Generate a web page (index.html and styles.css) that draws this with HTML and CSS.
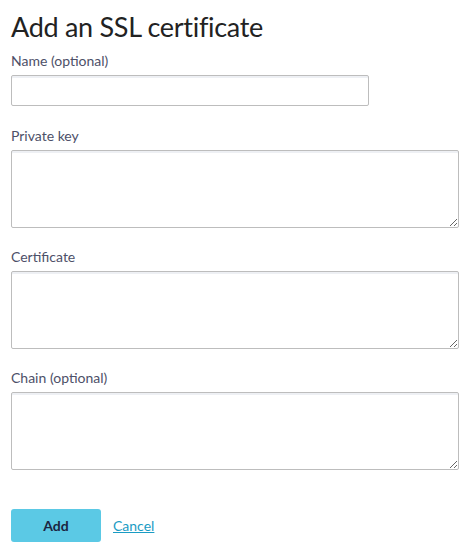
FILE: index.html
```html
<!DOCTYPE html>
<html>
<head>
<meta charset="utf-8">
<link rel="stylesheet" href="styles.css">
</head>
<body>
<form class="form">
  <h1 class="title">Add an SSL certificate</h1>
  <div class="field">
    <label class="label">Name (optional)</label>
    <input class="input" type="text">
  </div>
  <div class="field">
    <label class="label">Private key</label>
    <textarea class="textarea"></textarea>
  </div>
  <div class="field">
    <label class="label">Certificate</label>
    <textarea class="textarea"></textarea>
  </div>
  <div class="field">
    <label class="label">Chain (optional)</label>
    <textarea class="textarea"></textarea>
  </div>
  <div class="actions">
    <button class="btn" type="button">Add</button>
    <a class="cancel" href="#">Cancel</a>
  </div>
</form>
</body>
</html>
```
FILE: styles.css
```css
* { box-sizing: border-box; }
html, body { margin: 0; padding: 0; background: #fff; }
body {
  font-family: Lato, "Open Sans", "Liberation Sans", sans-serif;
  color: #222;
}
.form {
  padding: 11px 11px 0 11px;
  display: flex;
  flex-direction: column;
}
.title {
  margin: 0;
  font-size: 27px;
  font-weight: 400;
  line-height: 32px;
  color: #222;
  letter-spacing: -0.3px;
}
.field {
  display: flex;
  flex-direction: column;
  margin-top: 10px;
}
.field + .field { margin-top: 21px; }
.label {
  font-size: 14px;
  line-height: 16px;
  color: #4d5068;
  margin-bottom: 6px;
}
.input, .textarea {
  border: 1px solid #bdbdbd;
  border-radius: 2px;
  box-shadow: inset 0 2px 0 #eef0f4;
  background: #fff;
  font: inherit;
  outline: none;
}
.input {
  width: 358px;
  height: 31px;
  margin-bottom: 1px;
}
.textarea {
  width: 448px;
  height: 78px;
  resize: vertical;
  margin: 0;
  display: block;
}
.actions {
  display: flex;
  align-items: center;
  gap: 12px;
  margin-top: 39px;
}
.btn {
  width: 90px;
  height: 33px;
  border: none;
  border-radius: 3px;
  background: #5bc9e5;
  color: #1b2541;
  font-family: inherit;
  font-size: 14px;
  font-weight: 700;
}
.cancel {
  color: #1a9cc4;
  font-size: 14px;
  text-decoration: underline;
}
```
